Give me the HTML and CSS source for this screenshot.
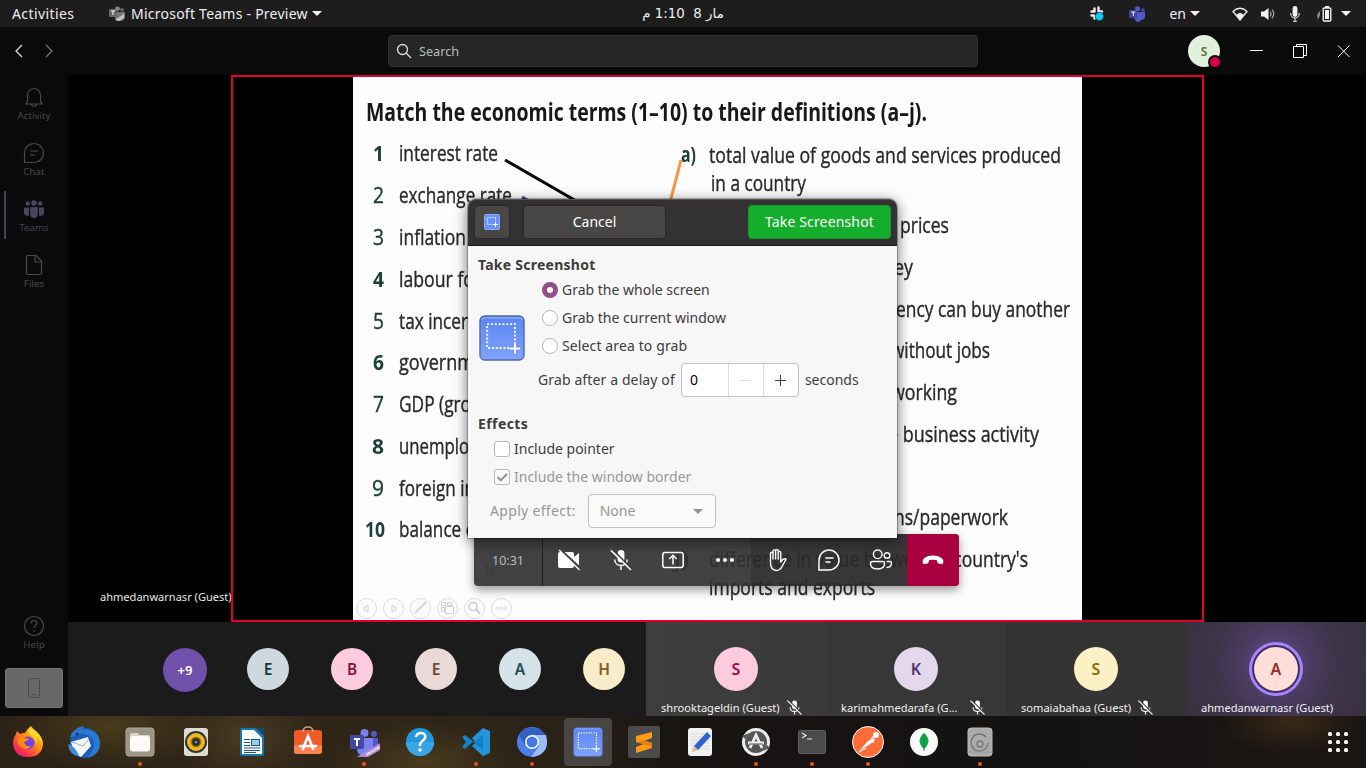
FILE: index.html
```html
<!DOCTYPE html>
<html lang="en">
<head>
<meta charset="utf-8">
<title>Microsoft Teams - Preview</title>
<link rel="stylesheet" href="styles.css">
</head>
<body>
<svg width="0" height="0" class="defs">
  <defs>
    <symbol id="mic-off" viewBox="0 0 24 24"><rect x="8.6" y="2" width="6.8" height="12.4" rx="3.4" fill="currentColor"/><path d="M5.7 11.5c0 8 12.6 8 12.6 0M12 17.5V22" fill="none" stroke="currentColor" stroke-width="1.5"/><path class="slash-bg" d="M3.500 1.500 23 21"/><path d="M2 2.4 22 22" stroke="currentColor" stroke-width="1.6"/></symbol>
    <symbol id="shot" viewBox="0 0 48 48"><rect x="1" y="1" width="46" height="46" rx="5" fill="url(#blue)" stroke="#50699f" stroke-width="1.4"/><path d="M3 5q0-2 2-2h38q2 0 2 2" fill="none" stroke="#a3bbfb"/><rect x="8.5" y="9.5" width="29" height="25" fill="none" stroke="#fff" stroke-width="2" stroke-dasharray="2 2"/><path d="M32 35h11M37.500 29.500v11" stroke="#6f95f8" stroke-width="5"/><path d="M32 35h11M37.500 29.500v11" stroke="#fff" stroke-width="2"/></symbol>
    <linearGradient id="blue" x2="0" y2="1"><stop stop-color="#5c85f3"/><stop offset="1" stop-color="#7fa3fd"/></linearGradient>
  </defs>
</svg>

<header class="topbar">
  <span class="activities">Activities</span>
  <span class="app-menu">
    <svg width="17" height="16" viewBox="0 0 17 16"><circle cx="8.500" cy="2.800" r="2.400" fill="#888"/><circle cx="13" cy="3.800" r="1.900" fill="#666"/><path d="M6 6h10v5q-1 4-5 4t-5-3z" fill="#777"/><rect y="3" width="7.500" height="8" rx="1" fill="#666"/><path d="M2 5h4M4 5v4" stroke="#fff"/><path d="m6 14 9-6v4l-5 3z" fill="#c4c4c4"/></svg>
    <span class="app-title">Microsoft Teams - Preview</span>
    <i class="caret"></i>
  </span>
  <span class="clock" dir="rtl">مار 8&nbsp; 1:10 م</span>
  <span class="tray">
    <svg class="t-slack" width="16" height="16" viewBox="0 0 16 16"><path d="M5.500 2.500v3M9.500 1.500v4M2.500 5.500h3M10 5.500h3M2.500 9.500h2M5.500 10v2.500" stroke="#eee" stroke-width="2.400" stroke-linecap="round"/><circle cx="10.500" cy="10.500" r="4.200" fill="#08cdf5" stroke="#1d1d1d" stroke-width=".6"/></svg>
    <svg class="t-teams" width="17" height="16" viewBox="0 0 17 16"><circle cx="8.500" cy="2.800" r="2.600" fill="#5059c9"/><circle cx="14" cy="4" r="1.800" fill="#4049b0"/><path d="M6 6h10v5q-1 3-4 3-1 2-3 2t-4-4z" fill="#5059c9"/><rect y="4" width="8" height="8" rx="1" fill="#3b429f"/><path d="M2.300 6h4M4.300 6v4" stroke="#fff"/></svg>
    <span class="lang">en</span><i class="caret caret-lang"></i>
    <svg class="t-wifi" width="16" height="14" viewBox="0 0 16 14"><path d="M1 4.500Q8-2 15 4.500L8 13Z" fill="none" stroke="#f2f2f2" stroke-width="1.300"/><path d="M4.300 7.500q3.700-3 7.400 0L8 13z" fill="#f2f2f2"/></svg>
    <svg class="t-vol" width="15" height="14" viewBox="0 0 15 14"><path d="M0 4.500h3L7.500 1v12L3 9.500H0z" fill="#f2f2f2"/><path d="M9 4.500q2 2.500 0 5M11 2.500q3.500 4.500 0 9" fill="none" stroke="#aaa" stroke-width="1.200"/></svg>
    <svg class="t-mic" width="10" height="16" viewBox="0 0 10 16"><rect x="2.600" width="4.800" height="11" rx="2.400" fill="#f2f2f2"/><path d="M.700 7q0 5 4.300 5t4.300-5M5 12v3M3 15.300h4" fill="none" stroke="#f2f2f2"/></svg>
    <svg class="t-bat" width="15" height="16" viewBox="0 0 15 16"><path d="M3.500 4 0 9h3v-5zM0 9h3L1 14z" fill="#8d8d8d"/><rect x="6.200" y="2" width="7.600" height="13" rx="1" fill="none" stroke="#f2f2f2" stroke-width="1.400"/><path d="M8 0h4v2H8zM8 4h4v9H8z" fill="#f2f2f2"/></svg>
    <i class="caret"></i>
  </span>
</header>

<div class="titlebar">
  <div class="nav">
    <svg width="8" height="14" viewBox="0 0 8 14"><path d="M7 1 1 7l6 6" fill="none" stroke="#ddd" stroke-width="1.300"/></svg>
    <svg width="8" height="14" viewBox="0 0 8 14"><path d="m1 1 6 6-6 6" fill="none" stroke="#777" stroke-width="1.300"/></svg>
  </div>
  <div class="search"><svg width="16" height="16" viewBox="0 0 16 16"><circle cx="6.500" cy="6.500" r="5" fill="none" stroke="#ddd" stroke-width="1.300"/><path d="m10 10 5 5" stroke="#ddd" stroke-width="1.300"/></svg><span>Search</span></div>
  <div class="me"><span>S</span><i></i></div>
  <svg class="win" width="104" height="16" viewBox="0 0 104 16" fill="none" stroke="#fff"><path d="M0 7.500h13"/><path d="M43.500 3.500h10v11h-10zM46.500 3V1.500h10v11H54M88 2.500l11.500 11.500M99.500 2.500 88 14"/></svg>
</div>

<div class="workspace">
  <nav class="rail">
    <div class="rail-item"><svg width="22" height="22" viewBox="0 0 22 22"><path d="M4.500 15V9a6.500 6.500 0 0 1 13 0v6l1.500 3H3zM8.500 18.500q.5 2 2.500 2t2.500-2"/></svg><span>Activity</span></div>
    <div class="rail-item"><svg width="22" height="22" viewBox="0 0 22 22"><path d="M1.500 20.500V11A9.500 9.500 0 1 1 11 20.500zM7 9h8M7 13h5"/></svg><span>Chat</span></div>
    <div class="rail-item active"><svg width="22" height="22" viewBox="0 0 22 22"><g class="solid"><circle cx="11" cy="5" r="2.800"/><circle cx="4.800" cy="5.500" r="2.200"/><circle cx="17.200" cy="5.500" r="2.200"/><path d="M7.200 9h7.600v7.500q-.5 3.500-3.800 3.500t-3.800-3.500zM1 9.500h5v8q-5 1-5-3zM21 9.500h-5v8q5 1 5-3z"/></g></svg><span>Teams</span></div>
    <div class="rail-item"><svg width="22" height="22" viewBox="0 0 22 22"><path d="M5 1.500h8L18.500 7v12q0 1.500-1.500 1.500H5q-1.500 0-1.500-1.500V3Q3.500 1.500 5 1.500zM12 1.500V8h6.500"/></svg><span>Files</span></div>
    <div class="rail-item help"><svg width="22" height="22" viewBox="0 0 22 22"><circle cx="11" cy="11" r="9.500"/><path d="M8 8.500q0-3 3-3t3 2.700c0 2.300-3 2.300-3 4.800M11 15v1.800"/></svg><span>Help</span></div>
    <div class="device"><svg width="14" height="22" viewBox="0 0 14 22" fill="none" stroke="#4c4c4c"><rect x="1.500" y="1.500" width="11" height="19" rx="1.500"/><path d="M5 17.500h4"/></svg></div>
  </nav>

  <div class="meeting">
    <main class="stage">
      <span class="presenter">ahmedanwarnasr (Guest)</span>
      <div class="share">
        <svg class="slide" width="729" height="543" viewBox="353 77 729 543">
          <rect x="353" y="77" width="729" height="543" fill="#fefdfe"/>
          <g class="slide-text">
            <text class="st" x="366" y="120.500" textLength="561" lengthAdjust="spacingAndGlyphs">Match the economic terms (1–10) to their definitions (a–j).</text>
            <g class="num" text-anchor="end">
              <text class="b" x="384" y="161" textLength="11" lengthAdjust="spacingAndGlyphs">1</text><text x="384" y="203" textLength="11" lengthAdjust="spacingAndGlyphs">2</text><text x="384" y="245" textLength="11" lengthAdjust="spacingAndGlyphs">3</text><text class="b" x="384" y="286.500" textLength="11" lengthAdjust="spacingAndGlyphs">4</text><text x="384" y="328.500" textLength="11" lengthAdjust="spacingAndGlyphs">5</text><text class="b" x="384" y="370" textLength="11" lengthAdjust="spacingAndGlyphs">6</text><text x="384" y="412" textLength="11" lengthAdjust="spacingAndGlyphs">7</text><text class="b" x="384" y="454" textLength="12" lengthAdjust="spacingAndGlyphs">8</text><text x="384" y="495.500" textLength="12" lengthAdjust="spacingAndGlyphs">9</text><text class="b" x="385" y="537" textLength="20" lengthAdjust="spacingAndGlyphs">10</text>
            </g>
            <text x="399" y="161" textLength="99" lengthAdjust="spacingAndGlyphs">interest rate</text>
            <text x="399" y="203" textLength="113" lengthAdjust="spacingAndGlyphs">exchange rate</text>
            <text x="399" y="245" textLength="67" lengthAdjust="spacingAndGlyphs">inflation</text>
            <text x="399" y="286.500" textLength="75" lengthAdjust="spacingAndGlyphs">labour fo</text>
            <text x="399" y="328.500" textLength="69" lengthAdjust="spacingAndGlyphs">tax incer</text>
            <text x="399" y="370" textLength="75" lengthAdjust="spacingAndGlyphs">governm</text>
            <text x="399" y="412" textLength="72" lengthAdjust="spacingAndGlyphs">GDP (gro</text>
            <text x="399" y="454" textLength="70" lengthAdjust="spacingAndGlyphs">unemplo</text>
            <text x="399" y="495.500" textLength="76" lengthAdjust="spacingAndGlyphs">foreign in</text>
            <text x="399" y="537" textLength="77" lengthAdjust="spacingAndGlyphs">balance o</text>
            <text class="num b" x="681" y="162" textLength="15" lengthAdjust="spacingAndGlyphs">a)</text>
            <text x="709" y="163" textLength="352" lengthAdjust="spacingAndGlyphs">total value of goods and services produced</text>
            <text x="711" y="191" textLength="95" lengthAdjust="spacingAndGlyphs">in a country</text>
            <text x="900" y="232.500" textLength="49" lengthAdjust="spacingAndGlyphs">prices</text>
            <text x="894" y="274.500" textLength="19" lengthAdjust="spacingAndGlyphs">ey</text>
            <text x="896" y="316.500" textLength="174" lengthAdjust="spacingAndGlyphs">ency can buy another</text>
            <text x="891" y="358" textLength="99" lengthAdjust="spacingAndGlyphs">without jobs</text>
            <text x="891" y="400" textLength="66" lengthAdjust="spacingAndGlyphs">working</text>
            <text x="888" y="442" textLength="151" lengthAdjust="spacingAndGlyphs">e business activity</text>
            <text x="894" y="525" textLength="114" lengthAdjust="spacingAndGlyphs">ns/paperwork</text>
            <text x="674" y="567" textLength="15" lengthAdjust="spacingAndGlyphs">j)</text>
            <text x="709" y="567" textLength="319" lengthAdjust="spacingAndGlyphs">difference in value between a country's</text>
            <text x="709" y="595" textLength="166" lengthAdjust="spacingAndGlyphs">imports and exports</text>
            <path d="M505 160 590 209" stroke="#050505" stroke-width="3"/>
            <path d="m522 197 20 11" stroke="#2f5597" stroke-width="3"/>
            <path d="m681 160-13 50" stroke="#f79646" stroke-width="3"/>
          </g>
          <g fill="none" stroke="#dcd9dc">
            <circle cx="366.500" cy="608.500" r="10"/><circle cx="393.500" cy="608.500" r="10"/><circle cx="420.500" cy="608.500" r="10"/><circle cx="447.500" cy="608.500" r="10"/><circle cx="474.500" cy="608.500" r="10"/><circle cx="501.500" cy="608.500" r="10"/>
            <path stroke="#cfcdd0" d="M368 605v7l-5-3.500zM392 605v7l5-3.500zM415 614l2-4 8-8 1 1-8 8zM441.500 602.500h4v3h-4zM447.500 602.500h4v3h-4zM441.500 607.500h3v4h-3zM445.500 606.500h8v7h-8z"/>
            <circle cx="473" cy="606.500" r="4" stroke="#cbc9cc" stroke-width="1.500"/><path d="m476 609.500 4 4" stroke="#cbc9cc" stroke-width="2"/>
            <circle cx="497.500" cy="608.500" r="1.300"/><circle cx="501.500" cy="608.500" r="1.300"/><circle cx="505.500" cy="608.500" r="1.300"/>
          </g>
        </svg>
      </div>
    </main>
    <section class="people">
      <div class="crowd">
        <span class="av more">+9</span><span class="av c1">E</span><span class="av c2">B</span><span class="av c3">E</span><span class="av c4">A</span><span class="av c5">H</span>
      </div>
      <div class="tile t1"><span class="av big c2">S</span><div class="name"><span>shrooktageldin (Guest)</span><svg width="17" height="17"><use href="#mic-off"/></svg></div></div>
      <div class="tile t2"><span class="av big c6">K</span><div class="name"><span>karimahmedarafa (G...</span><svg width="17" height="17"><use href="#mic-off"/></svg></div></div>
      <div class="tile t3"><span class="av big c7">S</span><div class="name"><span>somaiabahaa (Guest)</span><svg width="17" height="17"><use href="#mic-off"/></svg></div></div>
      <div class="tile t4"><span class="av big c8">A</span><div class="name"><span>ahmedanwarnasr (Guest)</span></div></div>
    </section>
  </div>
</div>

<div class="callbar">
  <span class="timer">10:31</span>
  <svg class="ghost" width="12" height="16" viewBox="0 0 12 16"><path d="M1.500 1v11l3-2.500 2 4.500 2-1-2-4h4z" fill="none" stroke="#383838"/></svg>
  <span class="cb"><svg width="24" height="24" viewBox="0 0 24 24"><path d="M3 4h12q2 0 2 2v3l5-4v14l-5-3v2q0 2-2 2H3q-2 0-2-2V6q0-2 2-2z" fill="#fff"/><path d="M3 1.500 23.500 20.500" stroke="#444" stroke-width="2.500"/><path d="M2 2 22.500 22" stroke="#fff" stroke-width="1.400"/></svg></span>
  <span class="cb"><svg width="24" height="24"><use href="#mic-off"/></svg></span>
  <span class="cb"><svg width="24" height="24" viewBox="0 0 24 24" fill="none" stroke="#fff" stroke-width="1.500"><rect x="1.800" y="4.500" width="20.400" height="15" rx="2"/><path d="M12 16.500v-9M8.300 11 12 7.300l3.700 3.700"/></svg></span>
  <span class="cb"><svg width="24" height="24" viewBox="0 0 24 24" fill="#fff"><circle cx="5" cy="12" r="2.100"/><circle cx="12" cy="12" r="2.100"/><circle cx="19" cy="12" r="2.100"/></svg></span>
  <span class="cb dark"><svg width="24" height="24" viewBox="0 0 24 24" fill="none" stroke="#fff" stroke-width="1.400" stroke-linecap="round" stroke-linejoin="round"><path d="M5.500 14V5.500q0-1.300 1.300-1.300T8 5.500V11M8 10V3.200Q8 2 9.300 2t1.300 1.200V11M10.600 10V2.700q0-1.200 1.300-1.200t1.300 1.200V11M13.200 10V4.500q0-1.200 1.200-1.200t1.300 1.200V14l2-2.500q2-1.500 3.300-.2L17 18.500q-2 4-5.500 4-6 0-6-8.500"/></svg></span>
  <span class="cb dark"><svg width="24" height="24" viewBox="0 0 24 24" fill="none" stroke="#fff" stroke-width="1.500"><path d="M2 22V12a10 10 0 1 1 10 10zM8.500 10h8M8.500 14h5"/></svg></span>
  <span class="cb dark"><svg width="24" height="24" viewBox="0 0 24 24" fill="none" stroke="#fff" stroke-width="1.400"><circle cx="8.700" cy="6.300" r="4.300"/><circle cx="18" cy="7.500" r="2.800"/><path d="M3.500 13.500h10.500q1.500 0 1.500 2 0 5.500-7 5.500t-7-5.500q0-2 2-2zM17.500 13.500h3.500q1.500 0 1.500 1.500 0 4.500-5 4.500"/></svg></span>
  <span class="cb end"><svg width="24" height="24" viewBox="0 0 24 24"><path d="M1.700 14.500q-.5-3 2-4.700Q7 7.600 12 7.600t8.300 2.200q2.500 1.700 2 4.700-.3 1.800-1.700 1.500l-3-.6q-1.200-.3-1.300-1.500l-.2-1.600Q12 11 7.900 12.300l-.2 1.600q-.1 1.200-1.300 1.500l-3 .6q-1.400.3-1.700-1.500z" fill="#fff"/></svg></span>
</div>

<div class="dialog">
  <div class="dlg-head">
    <span class="btn icon-btn"><svg width="16" height="16" viewBox="0 0 16 16"><rect x=".5" y=".5" width="15" height="15" rx="1" fill="#6b92f8" stroke="#8aa9f8"/><rect x="3.500" y="3.500" width="8" height="7" fill="none" stroke="#fff" stroke-dasharray="1 1"/><path d="M8.500 10.500h6M11.500 7.500v6" stroke="#6b92f8" stroke-width="3"/><path d="M9 10.500h5M11.500 8v5" stroke="#fff"/></svg></span>
    <span class="btn cancel">Cancel</span>
    <span class="btn take">Take Screenshot</span>
  </div>
  <div class="dlg-body">
    <b class="h1">Take Screenshot</b>
    <div class="grab">
      <svg class="logo" width="46" height="46"><use href="#shot"/></svg>
      <div class="options">
        <label class="opt"><i class="radio on"></i><span>Grab the whole screen</span></label>
        <label class="opt"><i class="radio"></i><span>Grab the current window</span></label>
        <label class="opt o3"><i class="radio"></i><span>Select area to grab</span></label>
        <div class="delay"><span class="d1">Grab after a delay of</span>
          <span class="spin"><span class="val">0</span><span class="step"><svg width="11" height="11"><path d="M0 5.500h11" stroke="#ddd"/></svg></span><span class="step"><svg width="11" height="11"><path d="M0 5.500h11M5.500 0v11" stroke="#3d3d3d"/></svg></span></span>
          <span class="d2">seconds</span></div>
      </div>
    </div>
    <b class="h2">Effects</b>
    <label class="chk"><i></i><span>Include pointer</span></label>
    <label class="chk off"><i><svg width="14" height="14" viewBox="0 0 14 14"><path d="m2.500 7 3.300 3.300L12 4" fill="none" stroke="#929292" stroke-width="2"/></svg></i><span>Include the window border</span></label>
    <div class="effect"><span class="e1">Apply effect:</span><span class="select"><span>None</span><i></i></span></div>
  </div>
</div>

<footer class="dock">
  <span class="app"><svg width="32" height="32" viewBox="0 0 32 32"><defs><linearGradient id="ff" x1="1" y1="0" x2=".2" y2="1"><stop stop-color="#fff044"/><stop offset=".45" stop-color="#ff980e"/><stop offset=".8" stop-color="#ff3647"/><stop offset="1" stop-color="#e31587"/></linearGradient></defs><path d="M19 0q2 3 5 5 7 6 7 13-1 13-15 13Q2 31 1 17q0-5 3-9l1-3 3 3q2-1 5-1Q16 2 19 0z" fill="url(#ff)"/><circle cx="16" cy="17" r="6.500" fill="#7542e5"/><path d="M5 13q5-3 9-1l3 1q-1 2-5 3 1 5 7 4-3 5-9 2-5-3-5-9z" fill="#ff8a16"/><path d="M18 2q-3 5 2 8 4 3 4 8 2-4 1-8 3 3 4 8Q30 7 18 2z" fill="#ffd62e"/></svg></span>
  <span class="app"><svg width="34" height="34" viewBox="0 0 34 34"><circle cx="18" cy="18" r="15" fill="#1b5db8"/><path d="M3 13Q5 3 17 1l-2 3q17 0 18 14 0 12-13 15 9-9 6-18-4-7-13-6-6 1-10 4z" fill="#2779d2"/><path d="m4 17 17-5 3 9-10 11q-8-4-10-15z" fill="#f5f6f8"/><path d="m5 17 11 4 6-7" fill="none" stroke="#9cadc4"/><path d="M1 19q6 1 12 13Q2 30 1 19z" fill="#3e8ee0"/><circle cx="10" cy="9" r="1.300" fill="#0b2455"/></svg></span>
  <span class="app run"><svg width="32" height="32" viewBox="0 0 32 32"><rect x="2" y="2" width="28" height="28" rx="3" fill="#9c9585" stroke="#aea898"/><path d="M6 9q0-2 2-2h5q2 0 2 2h9q2 0 2 2v2H6z" fill="#dad5c8"/><rect x="6" y="10" width="20" height="15.500" rx="3" fill="#fbfaf7"/></svg></span>
  <span class="app"><svg width="32" height="32" viewBox="0 0 32 32"><rect x="4" y="2" width="24" height="28" rx="3" fill="#dfddd1"/><circle cx="16" cy="16" r="11" fill="#2d3436"/><circle cx="16" cy="16" r="9" fill="#f3b71e"/><circle cx="16" cy="16" r="4.500" fill="#252b2d" stroke="#916b13" stroke-width="1.500"/><circle cx="16" cy="16" r="1.500" fill="#6c889b"/></svg></span>
  <span class="app"><svg width="32" height="32" viewBox="0 0 32 32"><path d="M6 2h14l8 8v18q0 2-2 2H6q-2 0-2-2V4q0-2 2-2z" fill="#1577ad"/><path d="M21 2h7v7z" fill="#0a4d76"/><path d="M6 4h12l8 8v16H6z" fill="#fff"/><path d="M8 13.500h6M8 16.500h6M8 19.500h6M8 22h16M8 24.500h16M8 26.500h12" stroke="#155888"/><rect x="15.500" y="13.500" width="8" height="6" fill="#99ccec" stroke="#155888"/></svg></span>
  <span class="app"><svg width="32" height="32" viewBox="0 0 32 32"><rect x="2" y="4" width="28" height="24" rx="3" fill="#ee5b27"/><path d="M2 19h28v6q0 3-3 3H5q-3 0-3-3z" fill="#ff8050"/><path d="M11 6q0-5 5-5t5 5" fill="none" stroke="#c4a484" stroke-width="1.500"/><path d="m10.500 24 5.500-14 5.500 14M7 20h18" fill="none" stroke="#fff" stroke-width="2.600"/></svg></span>
  <span class="app run"><svg width="32" height="32" viewBox="0 0 32 32"><circle cx="16.500" cy="7" r="4" fill="#7b83eb"/><circle cx="26" cy="8" r="3" fill="#5059c9"/><path d="M21 12h9v11q-1 4-6 4z" fill="#5059c9"/><path d="M9 12h16v12q-1 6-8 6t-8-6z" fill="#7b83eb"/><rect x="2" y="9" width="14" height="14" rx="1.500" fill="#4248a8"/><path d="M6 13h6M9 13v7" stroke="#fff" stroke-width="2"/><path d="m9 31 23-14v7l-12 7z" fill="#b289dd"/><text x="19" y="30" class="prev" transform="rotate(-31 19 30)">PREVIEW</text></svg></span>
  <span class="app"><svg width="32" height="32" viewBox="0 0 32 32"><circle cx="16" cy="16" r="14" fill="#2297dc"/><path d="M2 16a14 14 0 0 0 28 0z" fill="#38a6e5"/><path d="M12 11q1-4 5-4 5 0 4 5c-1 3-5 3-5 7v1" fill="none" stroke="#fff" stroke-width="2.500"/><circle cx="16" cy="24" r="1.700" fill="#fff"/></svg></span>
  <span class="app run"><svg width="32" height="32" viewBox="0 0 32 32"><path d="m2 11 3-2 18 14V7L5 23l-3-2 4-5z" fill="#1183c9"/><path d="m23 2 7 3v22l-7 3-11-10 3-3 8 6V9l-8 6-3-3z" fill="#2494dd"/></svg></span>
  <span class="app run"><svg width="32" height="32" viewBox="0 0 32 32"><circle cx="16" cy="16" r="15" fill="#4c7ee8"/><path d="M3 9a15 15 0 0 1 26 0H16L9 19z" fill="#345fc2"/><path d="M16 9h14q5 20-15 22l8-11z" fill="#9bbcf8"/><circle cx="16" cy="16" r="7" fill="#fff"/><circle cx="16" cy="16" r="5.500" fill="#4479e5"/></svg></span>
  <span class="app current"><svg width="30" height="30"><use href="#shot"/></svg></span>
  <span class="app"><svg width="32" height="32" viewBox="0 0 32 32"><rect width="32" height="32" rx="2" fill="#4b4b4b"/><path d="m8 10 16-4v6l-8 3 8 2v5L8 27v-6l8-3-8-2z" fill="#ff9b17"/><path d="m8 16 8-2 8 3v4z" fill="#e48210"/></svg></span>
  <span class="app"><svg width="32" height="32" viewBox="0 0 32 32"><rect x="4" y="2" width="24" height="28" rx="3" fill="#f1f1f1"/><path d="M7 8h18M7 11h18M7 14h18M7 17h18M7 20h18M7 23h18" stroke="#ddd"/><path d="m10 20 13-14 4 4-13 14z" fill="#2c64d5"/><path d="m10 20-2 6 6-2z" fill="#e6b782"/></svg></span>
  <span class="app run"><svg width="32" height="32" viewBox="0 0 32 32"><circle cx="16" cy="16" r="14" fill="#eee"/><circle cx="16" cy="16" r="11" fill="#555"/><path d="m10 22 6-13 6 13M8 17h16" fill="none" stroke="#eee" stroke-width="2.800"/><path d="m2 10 7-3-4 6zM30 22l-7 3 4-6z" fill="#555"/><path d="M9 18h14" stroke="#68425e"/></svg></span>
  <span class="app run"><svg width="32" height="32" viewBox="0 0 32 32"><rect x="2.500" y="4.500" width="27" height="23" rx="2" fill="#4b4b4b" stroke="#606060"/><path d="m6 7 4 2.500-4 2.500M11 13h5" fill="none" stroke="#eee" stroke-width="1.200"/></svg></span>
  <span class="app run"><svg width="32" height="32" viewBox="0 0 32 32"><circle cx="16" cy="16" r="15.500" fill="#ff6c37" stroke="#fff"/><path d="m8 24 8-9 6-3 1 2-6 5z" fill="#fff"/><circle cx="24" cy="9" r="3" fill="#fff"/><path d="m7 26 7-4M17 15l5 1M19 13l3-3" stroke="#fff" stroke-width="1.300"/></svg></span>
  <span class="app"><svg width="32" height="32" viewBox="0 0 32 32"><circle cx="16" cy="16" r="14" fill="#fafafa"/><path d="M16 7q9 8 0 16-9-8 0-16z" fill="#12a650"/><path d="M16 8v17" stroke="#0a8542"/></svg></span>
  <span class="app run"><svg width="32" height="32" viewBox="0 0 32 32"><rect x="4" y="2" width="24" height="28" rx="3" fill="#ababab" stroke="#bbb"/><path d="M22 11a8.500 8.500 0 1 0 2 6" fill="none" stroke="#777" stroke-width="1.300"/><circle cx="16" cy="18" r="3" fill="none" stroke="#777" stroke-width="1.300"/><path d="M4 26h24" stroke="#999"/></svg></span>
  <svg class="grid" width="20" height="20" viewBox="0 0 20 20" fill="#f6f6f6"><rect width="4" height="4" rx="1.500"/><rect x="8" width="4" height="4" rx="1.500"/><rect x="16" width="4" height="4" rx="1.500"/><rect y="8" width="4" height="4" rx="1.500"/><rect x="8" y="8" width="4" height="4" rx="1.500"/><rect x="16" y="8" width="4" height="4" rx="1.500"/><rect y="16" width="4" height="4" rx="1.500"/><rect x="8" y="16" width="4" height="4" rx="1.500"/><rect x="16" y="16" width="4" height="4" rx="1.500"/></svg>
</footer>
</body>
</html>
```
FILE: styles.css
```css
* { box-sizing: border-box; }
body { margin: 0; width: 1366px; height: 768px; overflow: hidden; position: relative; display: flex; flex-direction: column; background: #0a0a0a; font-family: "Noto Sans", "Open Sans", sans-serif; color: #eee; }
svg { display: block; flex: none; }
.defs { position: absolute; }
span { white-space: nowrap; }

.topbar { height: 27px; flex: none; background: #1d1d1d; display: grid; grid-template-columns: 1fr 84px 1fr; align-items: center; grid-template-areas: "left clock tray"; font-size: 14px; color: #f0f0f0; }
.activities { grid-area: left; margin-left: 12px; letter-spacing: .4px; }
.app-menu { grid-area: left; margin-left: 109px; display: flex; align-items: center; }
.app-title { margin-left: 5px; letter-spacing: .24px; }
.caret { border: 5px solid transparent; border-top-color: #f2f2f2; border-bottom: 0; flex: none; margin-left: 5px; }
.app-menu .caret { margin-left: 4px; }
.clock { grid-area: clock; font: 13.400px "DejaVu Sans", sans-serif; display: flex; justify-content: center; }
.tray { grid-area: tray; display: flex; align-items: center; justify-content: flex-end; padding-right: 15px; }
.t-teams { margin-left: 24px; }
.lang { margin-left: 23px; }
.caret-lang { margin-left: 4px; }
.t-wifi { margin-left: 32px; }
.t-vol { margin-left: 13px; }
.t-mic { margin-left: 14px; }
.t-bat { margin-left: 17px; }
.t-bat + .caret { margin-left: 9px; }

.titlebar { height: 48px; flex: none; display: flex; align-items: center; }
.nav { width: 388px; padding-left: 15px; display: flex; gap: 22px; }
.search { width: 590px; height: 32px; border: 1px solid #323232; border-radius: 4px; background: #252525; display: flex; align-items: center; padding-left: 7px; font-size: 12.700px; color: #bdbdbd; gap: 7px; }
.me { margin-left: 210px; width: 32px; height: 32px; border-radius: 50%; background: #e2f1dd; color: #4d7435; display: grid; place-items: center; font-size: 12px; font-weight: 600; position: relative; }
.me i { position: absolute; right: -2px; bottom: -2px; width: 14px; height: 14px; border-radius: 50%; background: #d90045; border: 2px solid #0a0a0a; }
.win { margin-left: 30px; }

.workspace { height: 641px; flex: none; display: flex; }
.rail { width: 68px; height: 641px; flex: none; display: flex; flex-direction: column; }
.rail-item { height: 56px; flex: none; display: flex; flex-direction: column; align-items: center; padding-top: 10.500px; font-size: 9.8px; color: #484848; line-height: 14px; gap: 1px; }
.rail-item svg { fill: none; stroke: #4b4b4b; stroke-width: 1.200; }
.rail-item.active { color: #45405e; position: relative; }
.active::before { content: ""; position: absolute; left: 4px; top: 4px; width: 2px; height: 48px; background: #45405e; }
.rail-item .solid { fill: #4a4563; stroke: none; }
.help { margin-top: 305px; }
.device { margin: 8px 5px 0; height: 40px; border: 1px solid #737373; border-radius: 3px; background: #686868; display: grid; place-items: center; }

.meeting { width: 1298px; }
.stage { height: 547px; background: #000; display: flex; }
.presenter { width: 163px; flex: none; padding: 514px 0 0 32px; font-size: 11.050px; line-height: 16px; color: #e8e8e8; }
.share { width: 973px; height: 547px; border: 2px solid #e3002b; display: flex; justify-content: center; }
.slide-text { filter: blur(.45px); font: 22px "Open Sans", sans-serif; fill: #2b282c; stroke: #2b282c; stroke-width: .4; }
.slide-text path { fill: none; }
.st { font-size: 24.500px; font-weight: 700; fill: #19171a; stroke: none; }
.num { fill: #1d4038; stroke: #1d4038; }
.b { font-weight: 700; stroke: none; }

.people { height: 94px; display: flex; background: #1b1b1b; }
.crowd { width: 578px; padding-left: 95px; display: flex; align-items: center; gap: 42px; }
.av { width: 42px; height: 42px; border-radius: 50%; display: grid; place-items: center; font-size: 15.500px; font-weight: 600; flex: none; }
.more { width: 44px; height: 44px; margin: 2px -2px 0 0; background: #7050aa; color: #fff; font-size: 13px; }
.c1 { background: #cdd9df; color: #0e3b42; } .c2 { background: #fccbde; color: #8e1048; } .c3 { background: #e9dad7; color: #6f4640; }
.c4 { background: #d5e3e8; color: #204c57; } .c5 { background: #f8eccb; color: #806021; } .c6 { background: #e4d9ec; color: #51346f; }
.c7 { background: #fbf1c5; color: #8b6a00; } .c8 { background: #ffddd8; color: #932d2d; }
.tile { width: 180px; display: flex; flex-direction: column; align-items: center; padding-top: 25px; }
.t1 { background: linear-gradient(90deg, #3e3e3e, #3a3a3a); } .t2 { background: #373737; } .t3 { background: #333; }
.t4 { background: radial-gradient(circle at 50% 45%, #604889 10%, #4b3c63 32%, #3d3449 60%, #38313f); }
.big { width: 44px; height: 44px; font-size: 16px; }
.c8.big { box-shadow: 0 0 0 2px #3c2d60, 0 0 0 5px #a884ff; }
.name { align-self: stretch; height: 18px; margin-top: 7px; padding-left: 15px; display: flex; align-items: center; font-size: 11.100px; gap: 6px; color: #f2f2f2; }
.t2 .name { gap: 11px; }
.name svg { color: #fff; }
.slash-bg { stroke: #3b3b3b; stroke-width: 1.700; }

.callbar { position: absolute; left: 474px; top: 534px; width: 485px; height: 52px; border-radius: 4px; overflow: hidden; display: flex; background: rgba(50,50,50,.92); box-shadow: 0 4px 10px rgba(0,0,0,.4); }
.timer { width: 69px; border-right: 1px solid #1f1f1f; font-size: 12.500px; color: #bbb; display: grid; place-items: center; }
.ghost { position: absolute; left: 11px; top: 29px; }
.cb { width: 52px; display: grid; place-items: center; color: #fff; }
.dark { background: rgba(20,20,20,.22); }
.end { background: #a9003f; }

.dialog { position: absolute; left: 468px; top: 199px; width: 429px; height: 339px; border-radius: 8px 8px 0 0; background: #f7f7f7; color: #3d3d3d; font-size: 14px; line-height: 20px; box-shadow: 0 0 0 1px rgba(0,0,0,.25), 0 3px 14px rgba(0,0,0,.6); }
.dlg-head { height: 47px; border-radius: 8px 8px 0 0; background: #343132; border-top: 1px solid #575555; border-bottom: 1px solid #1c1b1b; display: flex; padding: 5px 6px 0; }
.btn { height: 34px; border-radius: 4px; display: grid; place-items: center; background: #494745; border: 1px solid #292727; color: #fff; }
.icon-btn { width: 36px; }
.cancel { width: 143px; margin-left: 13px; }
.take { width: 143px; margin-left: auto; background: #14ae2c; border-color: #129927; letter-spacing: .15px; }
.dlg-body { padding: 9px 10px; display: flex; flex-direction: column; }
.h1 { letter-spacing: .25px; }
.grab { display: flex; }
.logo { margin: 40px 0 0 1px; }
.options { padding-left: 13px; }
.opt { height: 28px; padding: 1px 0 0 4px; display: flex; align-items: center; gap: 4px; }
.o3 { letter-spacing: .12px; }
.radio { width: 16px; height: 16px; border: 1px solid #b8b8b8; border-radius: 50%; background: #fff; }
.radio.on { border: 5.500px solid #924d8b; }
.delay { display: flex; align-items: center; margin-top: 4px; height: 34px; }
.d1 { letter-spacing: .12px; }
.spin { margin-left: 6px; width: 118px; height: 34px; border: 1px solid #c2c2c2; border-radius: 4px; background: #fff; display: flex; color: #000; }
.val { width: 46px; padding: 6px 8px; }
.step { width: 35px; border-left: 1px solid #ddd; display: grid; place-items: center; }
.d2 { margin-left: 6px; }
.h2 { margin-top: 17px; letter-spacing: .4px; }
.chk { height: 28px; display: flex; align-items: center; gap: 4px; padding-left: 16px; }
.h2 + .chk { margin-top: 1px; }
.chk i { width: 16px; height: 16px; border: 1px solid #b8b8b8; border-radius: 3px; background: #fff; }
.off, .effect { color: #979797; }
.off i { background: #fafafa; }
.effect { display: flex; align-items: center; padding-left: 12px; margin-top: 3px; height: 34px; }
.e1 { letter-spacing: .32px; }
.select { width: 128px; height: 34px; border: 1px solid #c2c2c2; border-radius: 4px; background: #fafafa; margin-left: 12px; padding: 0 12px 0 11px; display: flex; align-items: center; justify-content: space-between; }
.select i { border: 5px solid transparent; border-top-color: #929292; border-bottom: 0; }

.dock { height: 52px; flex: none; display: flex; position: relative; background: radial-gradient(ellipse 110px 45px at 110px 10px, #5a491f99, transparent), radial-gradient(ellipse 70px 50px at 245px 20px, #604d2b88, transparent), radial-gradient(ellipse 90px 40px at 425px 45px, #5b481f99, transparent), radial-gradient(ellipse 70px 35px at 1290px 5px, #50341899, transparent), linear-gradient(90deg, #2a2117, #302618 25%, #2b2318 40%, #171412 50%, #151312 75%, #191613); }
.app { width: 56px; height: 52px; display: grid; place-items: center; position: relative; }
.app svg { position: relative; }
.run::after { content: ""; position: absolute; left: 26px; bottom: 2px; width: 4px; height: 4px; border-radius: 50%; background: #e9541f; }
.current::before { content: ""; position: absolute; left: 4px; top: 2px; width: 48px; height: 48px; border-radius: 4px; background: #484442; }
.prev { font: 700 3.500px "Noto Sans", sans-serif; fill: #fff; }
.grid { margin: 16px 18px 0 auto; }
```
